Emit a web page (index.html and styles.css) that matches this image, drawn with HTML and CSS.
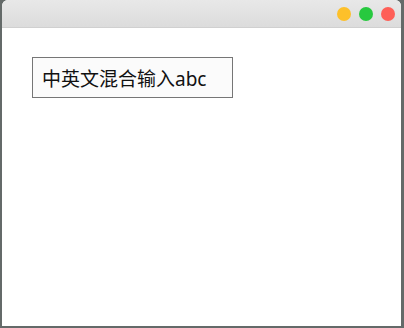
FILE: index.html
```html
<!DOCTYPE html>
<html lang="zh">
<head>
    <meta charset="UTF-8">
    <title>输入</title>
    <link rel="stylesheet" href="styles.css">
</head>
<body>
    <div class="window">
        <div class="titlebar">
            <span class="dot yellow"></span>
            <span class="dot green"></span>
            <span class="dot red"></span>
        </div>
        <div class="content">
            <input class="text-input" type="text" value="中英文混合输入abc">
        </div>
    </div>
</body>
</html>
```

FILE: styles.css
```css
html, body {
    margin: 0;
    height: 100%;
}

body {
    background-color: #646a69;
    font-family: "Noto Sans", "Noto Sans CJK SC", sans-serif;
    padding: 0 3px 2px 2px;
    box-sizing: border-box;
}

.window {
    height: 100%;
    background-color: #fff;
    border-radius: 6px 6px 0 0;
    overflow: hidden;
    display: flex;
    flex-direction: column;
}

.titlebar {
    height: 27px;
    flex-shrink: 0;
    background: linear-gradient(#e8e8e8, #dcdcdc);
    border-bottom: 1px solid #d0d0d0;
    display: flex;
    justify-content: flex-end;
    align-items: center;
    gap: 8px;
    padding-right: 6px;
}

.dot {
    width: 14px;
    height: 14px;
    border-radius: 50%;
}

.yellow {
    background-color: #fdc02a;
}

.green {
    background-color: #27c93f;
}

.red {
    background-color: #fe5f57;
}

.content {
    flex: 1;
    padding: 29px 30px;
}

.text-input {
    width: 201px;
    height: 41px;
    box-sizing: border-box;
    border: 1px solid #767676;
    background-color: #fbfbfb;
    padding: 0 9px;
    font-family: "Noto Sans", "Noto Sans CJK SC", sans-serif;
    font-size: 19px;
    color: #111;
    outline: none;
}
```
